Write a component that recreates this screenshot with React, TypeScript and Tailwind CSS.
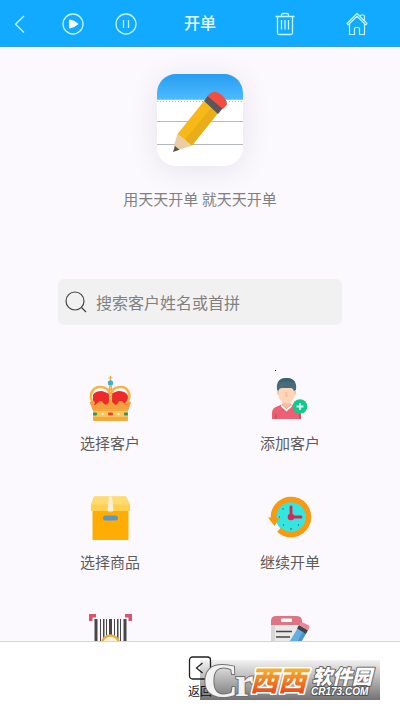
import React from 'react';

interface Action {
  name: string;
  label?: string;
  icon: React.ReactNode;
}

const iconClass = 'h-[46px] w-11 overflow-visible';

function BackIcon() {
  return (
    <svg viewBox="0 0 24 24" className="size-6" fill="none" stroke="currentColor" strokeWidth="1.3">
      <path d="M16 4 7.5 12.3 16 20.5" />
    </svg>
  );
}

function PlayIcon() {
  return (
    <svg viewBox="0 0 24 24" className="size-6" fill="none" stroke="currentColor" strokeWidth="1.3">
      <circle cx="12" cy="12" r="10" />
      <path d="M8.6 8.2v7.6q4.4-.7 8-3.8-3.6-3.1-8-3.8Z" fill="#fff" stroke="#fff" strokeLinejoin="round" />
    </svg>
  );
}

function PauseIcon() {
  return (
    <svg viewBox="0 0 24 24" className="size-6" fill="none" stroke="currentColor" strokeWidth="1.3">
      <circle cx="12" cy="12" r="10" />
      <path d="M9.5 8v8M14.500 8v8" />
    </svg>
  );
}

function TrashIcon() {
  return (
    <svg viewBox="0 0 24 24" className="size-6" fill="none" stroke="currentColor" strokeWidth="1.3">
      <path d="M2.500 4.500h19M8.500 4.500V3q0-1.500 1.500-1.500h4q1.500 0 1.500 1.500v1.500M4.500 4.500v16.500q0 1.500 1.500 1.500h12q1.500 0 1.500-1.500V4.500M8.500 8v9.500M12 8v9.500M15.500 8v9.500" />
    </svg>
  );
}

function HomeIcon() {
  return (
    <svg viewBox="0 0 24 24" className="size-6" fill="none" stroke="currentColor" strokeWidth="1.2" strokeLinejoin="round">
      <path d="M2 11.500 12 1.500l10 10-1.300 1.300L12 4.300l-8.700 8.500ZM4.500 12v10.500h5v-6q0-1 1-1h3q1 0 1 1v6h5V12M15 4.500q0-1.500 1.500-1.500h1.500q1.500 0 1.500 1.500v4.500" />
    </svg>
  );
}

function NotesLogo() {
  return (
    <svg viewBox="0 0 86 92" className="h-[92px] w-[86px]">
      <defs>
        <linearGradient id="sky" x2="0" y2="1">
          <stop stopColor="#279df0" />
          <stop offset="1" stopColor="#4bbaff" />
        </linearGradient>
        <clipPath id="sheet">
          <rect width="86" height="92" rx="19" />
        </clipPath>
      </defs>
      <g clipPath="url(#sheet)">
        <path fill="#fff" d="M0 0h86v92H0z" />
        <path fill="url(#sky)" d="M0 0h86v25H0z" />
        <path stroke="#b4b9bd" d="M0 25.500h86M0 47.500h86M0 70.500h86" />
        <path stroke="#b4b9bd" strokeDasharray="1 2" d="M0 27.500h86" />
      </g>
      <path fill="#eacda5" d="m20.500 60 14.500 11.500-15 5-3.500-3.500Z" />
      <path fill="#555" d="m16 78 2-6 4.500 3.800Z" />
      <path fill="#f7b917" d="M20.500 60 47 27l14 12-26 32.500Z" />
      <path fill="#e8ad18" d="m28 65.500 26.500-32L61 39 35 71.500Z" />
      <path fill="#5a575a" d="m47 27 4-5.500L66 34l-5 6Z" />
      <path fill="#f54e40" d="m50.500 22 2.500-2.500q5-4 11 1t6 10L66 35Z" />
    </svg>
  );
}

function CrownIcon() {
  return (
    <svg viewBox="0 0 44 46" className={iconClass}>
      <path fill="#ed292c" d="M5 28V19q2-4 9-4l8 3 8-3q8 0 10 5v9H5Z" />
      <path fill="none" stroke="#f2b44e" strokeWidth="2.600" d="M6 28C-1 19 5 10.500 13 11q8 0 9.500 9Q24 11 32 11c8-.5 13 8.500 6 17" />
      <path fill="none" stroke="#efaa44" strokeWidth="3.200" d="M22.500 10v19" />
      <path stroke="#fbd56e" strokeWidth="1.200" strokeDasharray="1.500 2" d="M22.500 11v17" />
      <path stroke="#efaa44" strokeWidth="1.200" d="M22.500 0v5M20.500 2h4" />
      <circle cx="22.500" cy="7" r="2.700" fill="#39afd2" />
      <path fill="#f4a13d" d="m2 26 5 3 5-4 6 4 4.500-4 5 4 6-4 5 4 4.500-3-2.500 8h-36Z" />
      <g fill="#f59c3d">
        <circle cx="3.500" cy="27" r="1.700" />
        <circle cx="13" cy="27" r="2" />
        <circle cx="22.500" cy="27" r="2" />
        <circle cx="32" cy="27" r="2" />
        <circle cx="41" cy="27" r="1.700" />
      </g>
      <rect x="5" y="33" width="35" height="12" rx="1" fill="#f5a83f" />
      <path fill="#f9c458" d="M5 35h35v6H5z" />
      <g fill="#319655">
        <rect x="5" y="36.500" width="4" height="3" rx="1" />
        <rect x="36" y="36.500" width="4" height="3" rx="1" />
      </g>
      <rect x="20" y="36.500" width="5" height="3" rx="1" fill="#dd4830" />
      <circle cx="14.500" cy="38" r="1.200" fill="#fff3cf" />
      <circle cx="30.500" cy="38" r="1.200" fill="#fff3cf" />
    </svg>
  );
}

function AddPersonIcon() {
  return (
    <svg viewBox="0 0 44 46" className={iconClass}>
      <path fill="#ed6073" d="M4 43v-6q0-5 5-6.500l6-2.500h7l6 2.500q5 1 5 6V43Z" />
      <path fill="#cf4a61" d="M7 38v5h1.500v-5ZM31 38v5h1.500v-5Z" />
      <path fill="#fff" d="M13.500 28.500 18.500 33l5-4.500.5 2-5.500 5-5.500-5Z" />
      <path fill="#f3c29e" d="M14.500 24h8v5l-4 3.500-4-3.500Z" />
      <path fill="#ffd5b7" d="M10 11h17v7q-1 8.500-8.500 9.500Q11 26 10 18Z" />
      <path fill="#f6bf9d" d="M9 15h1.500v4Q8.500 18 9 15ZM26.500 15H28q.5 3-1.500 4ZM17.500 16h2v5h-2Z" />
      <path fill="#476c7c" d="M9 14Q7.500 2 18.500 2T28 14l-2 1q-1-3-3-3H14q-3 0-3.500 3Z" />
      <path fill="#3d6272" d="M10 7q2-5 8.500-5T27 7q-8-3-17 0Z" />
      <circle cx="32" cy="30.500" r="7.300" fill="#11c98b" />
      <path stroke="#d8fff0" strokeWidth="1.800" d="M28.500 30.500h7M32 27v7" />
    </svg>
  );
}

function BoxIcon() {
  return (
    <svg viewBox="0 0 44 46" className={iconClass}>
      <path fill="#ffac03" d="M4.500 14h36v31h-36Z" />
      <path fill="#ffcf4d" d="m6 1.500-3 8V16h39V9.500l-4-8Z" />
      <path fill="#ffdc73" d="m6 1.500-3 8h39l-4-8Z" />
      <path fill="#f8efd9" d="M21 1.500h3L25.500 16q-3 1-6 0Z" />
      <rect x="15" y="20.500" width="15" height="5" rx="2.500" fill="#5b95c9" />
    </svg>
  );
}

function ClockIcon() {
  return (
    <svg viewBox="0 0 44 46" className={iconClass}>
      <circle cx="23" cy="22" r="15.500" fill="#34e6df" />
      <path fill="none" stroke="#fa980f" strokeWidth="5.500" d="M5.600 24A17.500 17.500 0 1 1 11 34.700" />
      <path fill="#fa980f" d="M0 22.500 11.500 23 6.500 31Z" />
      <path fill="none" stroke="#1586a0" strokeWidth="1.300" d="M23 33v2M11 22h1M14.500 13.500l1 1M15 30.500l1-1M31 30.500l-1-1" />
      <path fill="none" stroke="#d22955" strokeWidth="2.800" strokeLinecap="round" d="M23 12v10h10" />
      <circle cx="23" cy="22" r="3.300" fill="#d22955" />
    </svg>
  );
}

function BarcodeIcon() {
  return (
    <svg viewBox="0 0 44 46" className={iconClass}>
      <path fill="#d8546a" d="M1 0h7v3.500H4.500V7H1ZM37 0h7v7h-3.500V3.500H37Z" />
      <path fill="#474747" d="M6.500 5h3v41h-3ZM12 5h1v41h-1ZM15 5h1.500v41H15ZM18 5h1v41h-1ZM21 5h3v41h-3ZM26 5h1v41h-1ZM29 5h1.500v41H29ZM32 5h1v41h-1ZM35.500 5h3v41h-3Z" />
      <circle cx="22.500" cy="30" r="8.500" fill="#fff2d8" stroke="#e8ae43" strokeWidth="2.500" />
    </svg>
  );
}

function EditNoteIcon() {
  return (
    <svg viewBox="0 0 44 46" className={iconClass}>
      <path fill="#e9e9e7" d="M3 9h31v37H3Z" />
      <path fill="#d6d6d6" d="M3 9h4v37H3Z" />
      <path fill="#dd7585" d="M3 11V7q0-5 5-5h20q6 0 6 5v4Z" />
      <rect x="13" y="4.500" width="11" height="3.500" rx="1" fill="#fff" />
      <path stroke="#444" strokeWidth="1.500" d="M8 17.500h16M8 23h14M8 29h12" />
      <path fill="#63aede" d="m29.500 14.500 8.500 5-11 19-9-5Z" />
      <path fill="#4c94c7" d="m35 17.700 3 1.800-11 19-3-1.800Z" />
      <path fill="#3f4350" d="m29 14.500 2-3.500 9 5-2 4Z" />
      <path fill="#ef8495" d="m31 11 1-1.500q1.500-2 4-.5l4 2q2.500 1.500 1 3.500l-1 2Z" />
    </svg>
  );
}

const actions: Action[] = [
  { name: '选择客户', label: '选择客户', icon: <CrownIcon /> },
  { name: '添加客户', label: '添加客户', icon: <AddPersonIcon /> },
  { name: '选择商品', label: '选择商品', icon: <BoxIcon /> },
  { name: '继续开单', label: '继续开单', icon: <ClockIcon /> },
  { name: '扫码', icon: <BarcodeIcon /> },
  { name: '编辑', icon: <EditNoteIcon /> },
];

function Header() {
  return (
    <header className="grid h-[47px] shrink-0 grid-cols-[1fr_auto_1fr] items-center border-b border-[#2f9fe0] bg-[#12aaff] pt-0.5 text-[#c4f4ff]">
      <div className="flex items-center gap-[29px] pl-2">
        <button aria-label="后退"><BackIcon /></button>
        <button aria-label="播放"><PlayIcon /></button>
        <button aria-label="暂停"><PauseIcon /></button>
      </div>
      <h1 className="text-base font-medium text-[#e2f9ff]">开单</h1>
      <div className="flex items-center justify-end gap-12 pr-[31px]">
        <button aria-label="删除"><TrashIcon /></button>
        <button aria-label="主页"><HomeIcon /></button>
      </div>
    </header>
  );
}

function Watermark() {
  return (
    <div className="absolute right-5 bottom-2.5 h-10 w-[180px] bg-linear-to-b from-black/5 to-black/55">
      <svg viewBox="0 0 180 40" className="h-10 w-full">
        <defs>
          <linearGradient id="ember" gradientUnits="userSpaceOnUse" x1="0" y1="8" x2="0" y2="34">
            <stop stopColor="#f7b52f" />
            <stop offset="1" stopColor="#e6461c" />
          </linearGradient>
        </defs>
        <g fontFamily="'Liberation Serif', serif" fontWeight="700" fill="#f2f2f2" stroke="#707070" strokeWidth="2" paintOrder="stroke">
          <text x="3" y="37" fontSize="49">C</text>
          <text x="35" y="36" fontSize="42">r</text>
        </g>
        <g fontFamily="'Noto Sans CJK SC', sans-serif" fontStyle="italic" fontWeight="900" strokeLinejoin="round" paintOrder="stroke">
          <text x="50" y="31" fontSize="28" fill="url(#ember)" stroke="#fff" strokeWidth="3">西西</text>
          <text x="112" y="24" fontSize="20" fill="#fff" stroke="#666" strokeWidth="2">软件园</text>
        </g>
        <text x="111" y="35" fontFamily="'Liberation Sans', sans-serif" fontStyle="italic" fontWeight="700" fontSize="10" fill="#fff" stroke="#555" strokeWidth="2" paintOrder="stroke">CR173.COM</text>
      </svg>
    </div>
  );
}

function Footer() {
  return (
    <footer className="relative flex h-[69px] shrink-0 flex-col items-center border-t border-[#d4d4d8] bg-white pt-3.5">
      <button className="flex flex-col items-center gap-1 text-[#222]">
        <svg viewBox="0 0 24 24" className="size-6" fill="none" stroke="currentColor" strokeWidth="1.3">
          <rect x="1.500" y="1" width="21" height="22" rx="3" />
          <path d="m14.500 7-6 5 6 5" />
        </svg>
        <span className="text-xs leading-4">返回</span>
      </button>
      <Watermark />
    </footer>
  );
}

export default function App() {
  return (
    <div className="flex h-screen flex-col bg-[#fbf9fe] font-['Roboto','Noto_Sans_CJK_SC',sans-serif]">
      <Header />
      <main className="relative min-h-0 flex-1 overflow-y-auto [scrollbar-width:none]">
        <div className="flex flex-col items-center pt-[27px]">
          <div className="rounded-[19px] shadow-[0_4px_28px_rgba(80,70,110,0.12)]">
            <NotesLogo />
          </div>
          <p className="mt-[22px] text-[15px] leading-6 text-[#808080]">用天天开单 就天天开单</p>
        </div>

        <label className="mx-auto mt-[67px] flex h-[46px] w-[71%] items-center gap-2 rounded-md bg-[#f1f1f2] px-1.5">
          <svg viewBox="0 0 24 24" className="size-6 shrink-0" fill="none" stroke="#444" strokeWidth="1.2">
            <circle cx="11" cy="11" r="9" />
            <path d="m17.500 17.500 4.500 4.500" />
          </svg>
          <input
            type="text"
            aria-label="搜索客户"
            placeholder="搜索客户姓名或首拼"
            className="min-w-0 flex-1 bg-transparent pt-1 text-base text-[#555] outline-none placeholder:text-[#808080]"
          />
        </label>

        <div className="mt-[51px] grid grid-cols-2 gap-y-[39px] px-5 pb-6">
          {actions.map((action) => (
            <button key={action.name} aria-label={action.name} className="flex flex-col items-center gap-2.5">
              {action.icon}
              {action.label && <span className="text-[15px] leading-6 text-[#5c5c5c]">{action.label}</span>}
            </button>
          ))}
        </div>
        <span className="absolute top-[323px] left-[275px] size-px bg-black" />
      </main>
      <Footer />
    </div>
  );
}
